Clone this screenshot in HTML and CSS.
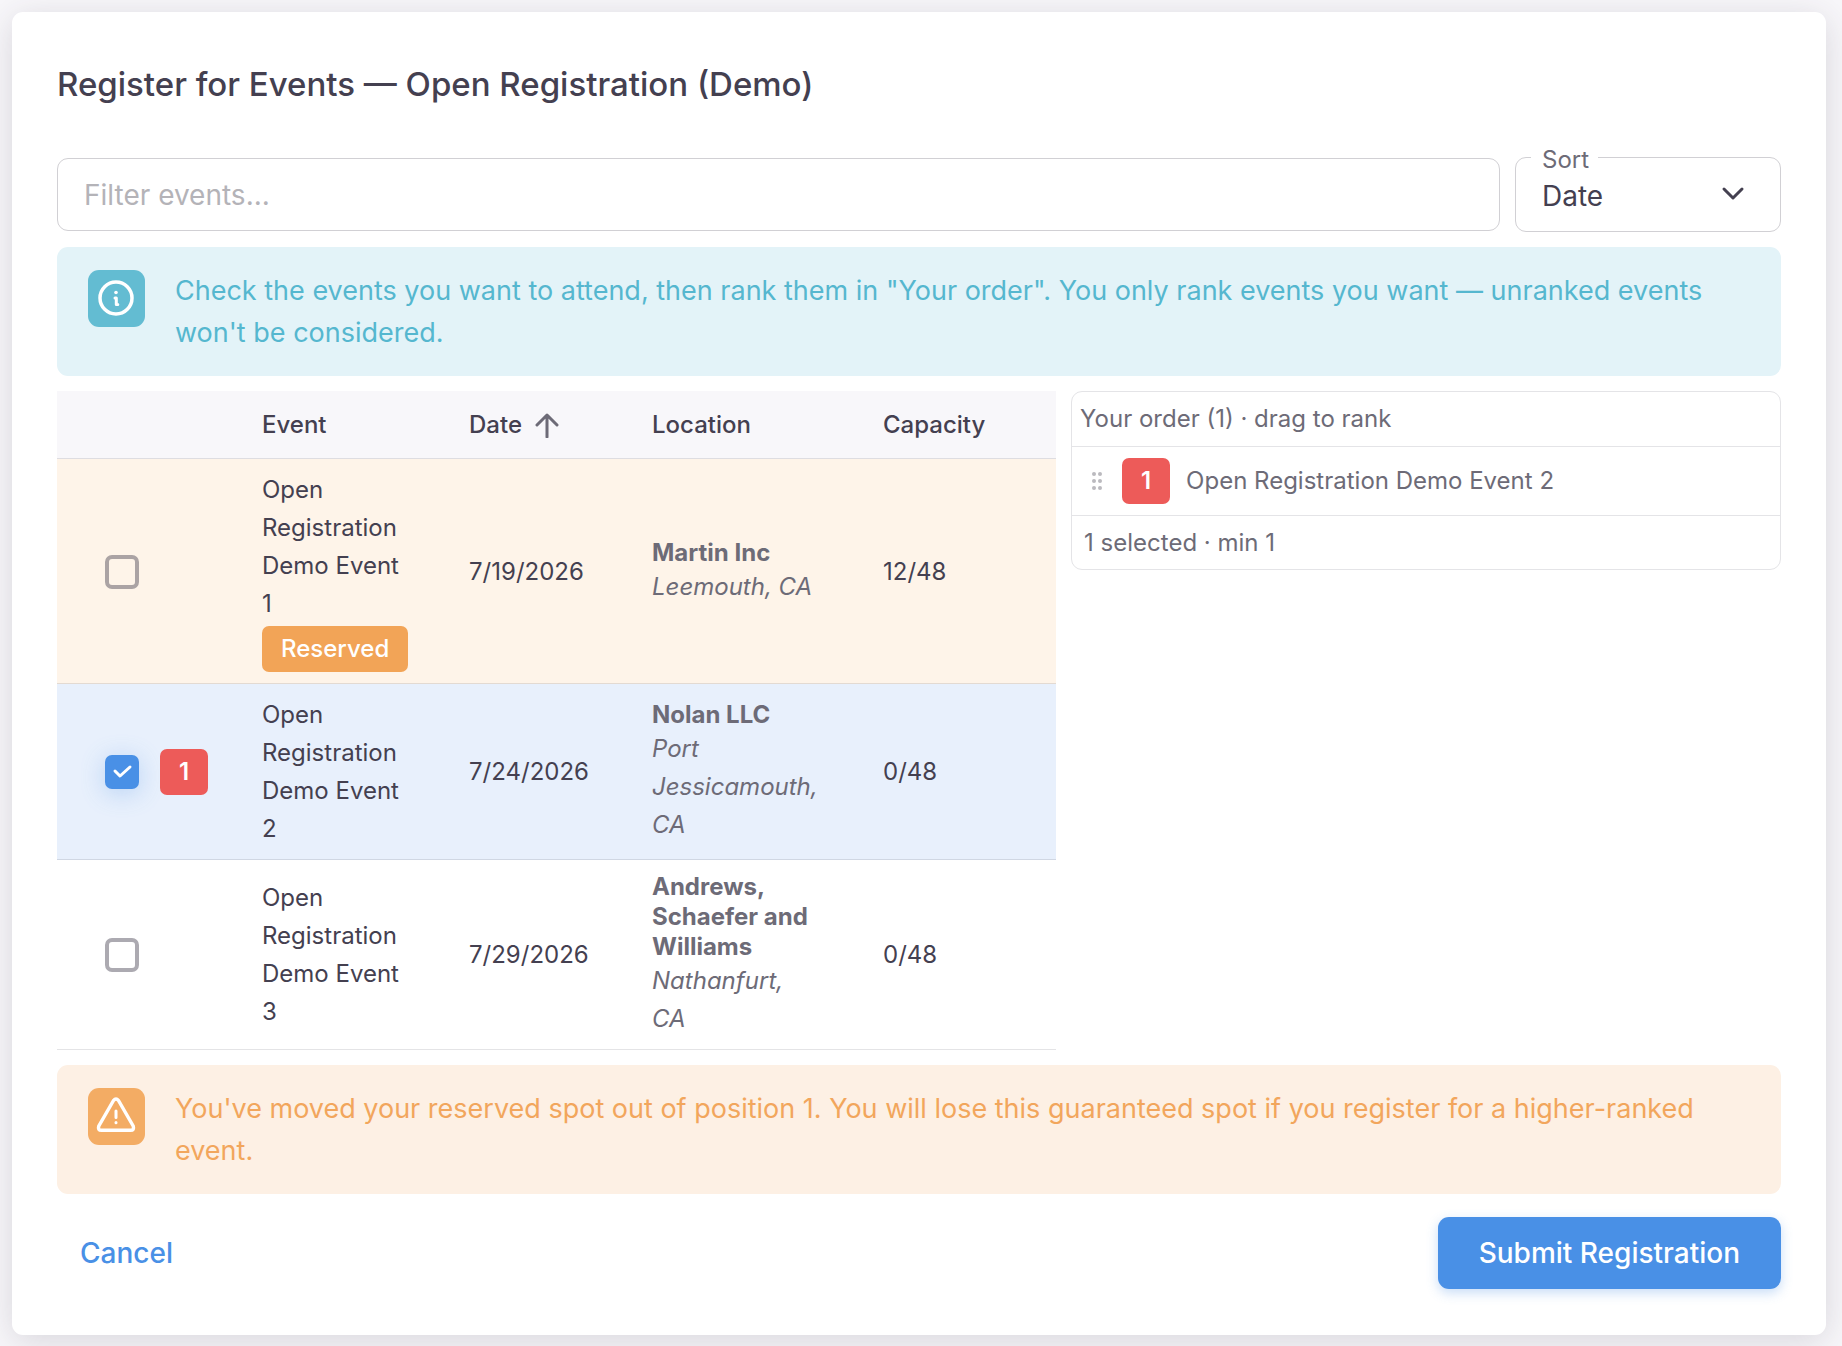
FILE: index.html
```html
<!DOCTYPE html>
<html lang="en">
<head>
<meta charset="utf-8">
<meta name="viewport" content="width=device-width, initial-scale=1">
<title>Register for Events</title>
<link rel="stylesheet" href="styles.css">
</head>
<body>
<main class="card">
  <h1 class="title">Register for Events — Open Registration (Demo)</h1>

  <form class="form">
    <div class="filters">
      <input class="filter-input" type="text" placeholder="Filter events..." aria-label="Filter events">
      <div class="sort">
        <label class="sort-label" for="sort">Sort</label>
        <select class="sort-select" id="sort">
          <option selected>Date</option>
          <option>Event</option>
          <option>Location</option>
        </select>
        <svg class="sort-arrow" viewBox="0 0 24 16" aria-hidden="true"><path d="M3 3l9 9 9-9"/></svg>
      </div>
    </div>

    <div class="alert alert-info">
      <span class="alert-icon">
        <svg viewBox="0 0 57 57" aria-hidden="true">
          <circle cx="28" cy="28" r="16"/>
          <circle class="dot" cx="28" cy="22.500" r="1.800"/>
          <path class="thin" d="M27 28h1.300v6.500h1.500"/>
        </svg>
      </span>
      <p class="alert-text">Check the events you want to attend, then rank them in "Your order". You only rank events you want — unranked events won't be considered.</p>
    </div>

    <div class="columns">
      <table class="events">
        <colgroup>
          <col class="col-select"><col class="col-event"><col class="col-date"><col class="col-location"><col>
        </colgroup>
        <thead>
          <tr>
            <th aria-label="Select"></th>
            <th>Event</th>
            <th aria-sort="ascending"><span class="sorted">Date
              <svg class="sort-up" viewBox="0 0 24 26" aria-hidden="true"><path d="M12 25V3M2 13L12 3l10 10"/></svg></span></th>
            <th>Location</th>
            <th>Capacity</th>
          </tr>
        </thead>
        <tbody>
          <tr class="row-reserved">
            <td><div class="pick"><input class="check" type="checkbox" aria-label="Open Registration Demo Event 1"></div></td>
            <td class="event">Open Registration Demo Event<br>1 <span class="chip">Reserved</span></td>
            <td>7/19/2026</td>
            <td class="location"><strong>Martin Inc</strong><em>Leemouth, CA</em></td>
            <td>12/48</td>
          </tr>
          <tr class="row-selected">
            <td><div class="pick"><input class="check" type="checkbox" checked aria-label="Open Registration Demo Event 2"><span class="rank">1</span></div></td>
            <td class="event">Open Registration Demo Event<br>2</td>
            <td>7/24/2026</td>
            <td class="location"><strong>Nolan LLC</strong><em>Port Jessicamouth, CA</em></td>
            <td>0/48</td>
          </tr>
          <tr>
            <td><div class="pick"><input class="check" type="checkbox" aria-label="Open Registration Demo Event 3"></div></td>
            <td class="event">Open Registration Demo Event<br>3</td>
            <td>7/29/2026</td>
            <td class="location"><strong>Andrews, Schaefer and Williams</strong><em>Nathanfurt, CA</em></td>
            <td>0/48</td>
          </tr>
        </tbody>
      </table>

      <section class="order">
        <h2 class="order-head">Your order (1) · drag to rank</h2>
        <ol class="order-list">
          <li class="order-item">
            <svg class="grip" viewBox="0 0 12 20" aria-hidden="true">
              <circle cx="3" cy="3" r="2"/><circle cx="9" cy="3" r="2"/>
              <circle cx="3" cy="10" r="2"/><circle cx="9" cy="10" r="2"/>
              <circle cx="3" cy="17" r="2"/><circle cx="9" cy="17" r="2"/>
            </svg>
            <span class="rank">1</span>
            <span>Open Registration Demo Event 2</span>
          </li>
        </ol>
        <p class="order-foot">1 selected · min 1</p>
      </section>
    </div>

    <div class="alert alert-warning">
      <span class="alert-icon">
        <svg viewBox="0 0 57 57" aria-hidden="true">
          <path d="M25.500 12.500L10.800 38Q9.500 42.300 13.500 42.300H42.500Q46.500 42.300 45.200 38L30.500 12.500Q28 9.500 25.500 12.500Z"/>
          <path class="thin" d="M28 23v6.500M28 34.600v.2"/>
        </svg>
      </span>
      <p class="alert-text">You've moved your reserved spot out of position 1. You will lose this guaranteed spot if you register for a higher-ranked event.</p>
    </div>

    <div class="actions">
      <button class="btn btn-text" type="button">Cancel</button>
      <button class="btn btn-primary" type="submit">Submit Registration</button>
    </div>
  </form>
</main>
</body>
</html>
```
FILE: styles.css
```css
:root {
  --heading: #444050;
  --muted: #6d6b77;
  --border: #e4e4e7;
  --primary: #4990e6;
  --warning: #f2a457;
  --danger: #ed5b59;
}

* {
  box-sizing: border-box;
}

body {
  margin: 0;
  padding: 12px 16px 12px 12px;
  background: #f8f7fa;
  color: var(--heading);
  font-family: Inter, "Liberation Sans", sans-serif;
  font-size: 24px;
  line-height: 38px;
}

.card {
  padding: 46px 45px;
  background: #fff;
  border-radius: 11px;
  box-shadow: 0 6px 34px rgba(47, 43, 61, 0.16);
}

.title {
  margin: 0 0 48px;
  font-size: 33px;
  line-height: 52px;
  font-weight: 500;
}

.form {
  display: flex;
  flex-direction: column;
  gap: 15px;
}

.filters {
  display: flex;
  align-items: center;
  gap: 15px;
  margin-top: -1px;
}

.filter-input {
  flex: 1;
  min-width: 0;
  height: 73px;
  padding: 0 26px;
  border: 1px solid #d1d0d4;
  border-radius: 11px;
  background: #fff;
  color: var(--heading);
  font: inherit;
  font-size: 28px;
}

.filter-input::placeholder {
  color: #b4b3b8;
  opacity: 1;
}

.sort {
  position: relative;
  width: 266px;
}

.sort-label {
  position: absolute;
  top: -16px;
  left: 16px;
  padding: 0 9px 0 11px;
  background: #fff;
  color: var(--muted);
  line-height: 38px;
}

.sort-select {
  display: block;
  width: 100%;
  height: 75px;
  padding: 3px 60px 0 26px;
  border: 1px solid #d1d0d4;
  border-radius: 11px;
  background: #fff;
  color: var(--heading);
  font: inherit;
  font-size: 28px;
  appearance: none;
}

.sort-arrow {
  position: absolute;
  top: 29px;
  right: 36px;
  width: 24px;
  height: 16px;
  fill: none;
  stroke: var(--heading);
  stroke-width: 3;
  stroke-linecap: round;
  stroke-linejoin: round;
  pointer-events: none;
}

.alert {
  display: flex;
  align-items: flex-start;
  gap: 30px;
  padding: 23px 31px 22px;
  border-radius: 11px;
}

.alert-icon {
  flex: none;
  width: 57px;
  height: 57px;
  border-radius: 11px;
}

.alert-icon svg {
  display: block;
  fill: none;
  stroke: #fff;
  stroke-width: 3.5;
  stroke-linecap: round;
  stroke-linejoin: round;
}

.alert-icon .dot {
  fill: #fff;
  stroke: none;
}

.alert-icon .thin {
  stroke-width: 3;
}

.alert-text {
  margin: 0;
  font-size: 27px;
  line-height: 42px;
}

.alert-info {
  background: #e3f3f8;
  color: #55b7cf;
}

.alert-info .alert-icon {
  background: #63bcd2;
}

.alert-warning {
  background: #fdf0e4;
  color: #f2a65c;
}

.alert-warning .alert-icon {
  background: #f3ac64;
}

.columns {
  display: grid;
  grid-template-columns: 38fr 27fr;
  align-items: start;
  gap: 15px;
}

.events {
  width: 100%;
  table-layout: fixed;
  border-collapse: separate;
  border-spacing: 0;
}

.col-select {
  width: 181px;
}

.col-event {
  width: 207px;
}

.col-date {
  width: 183px;
}

.col-location {
  width: 231px;
}

.events th,
.events td {
  padding: 12px 24px 11px;
  border-bottom: 1px solid rgba(47, 43, 61, 0.13);
  text-align: left;
  vertical-align: middle;
}

.events th {
  height: 68px;
  background: #f8f7fa;
  font-weight: 500;
}

.row-reserved {
  background: #fef4e9;
}

.row-selected {
  background: #e8f0fc;
}

.sorted {
  display: flex;
  align-items: center;
  gap: 13px;
}

.sort-up {
  width: 24px;
  height: 26px;
  fill: none;
  stroke: var(--muted);
  stroke-width: 3;
  stroke-linecap: round;
  stroke-linejoin: round;
}

.pick {
  display: flex;
  align-items: center;
  gap: 21px;
  padding-left: 24px;
}

.check {
  flex: none;
  width: 34px;
  height: 34px;
  margin: 0;
  border: 4px solid rgba(47, 43, 61, 0.4);
  border-radius: 7px;
  appearance: none;
}

.check:checked {
  border: 0;
  background: var(--primary) url("data:image/svg+xml,%3Csvg xmlns='http://www.w3.org/2000/svg' viewBox='0 0 34 34'%3E%3Cpath d='M10 16l5 5 10-9' fill='none' stroke='white' stroke-width='3' stroke-linecap='round' stroke-linejoin='round'/%3E%3C/svg%3E");
  box-shadow: 0 4px 24px rgba(73, 144, 230, 0.3);
}

.rank {
  flex: none;
  width: 48px;
  height: 46px;
  border-radius: 7px;
  background: var(--danger);
  color: #fff;
  font-weight: 600;
  line-height: 46px;
  text-align: center;
}

.chip {
  display: block;
  width: max-content;
  margin-top: 3px;
  padding: 0 19px;
  border-radius: 7px;
  background: var(--warning);
  color: #fff;
  font-weight: 500;
  line-height: 46px;
}

.events .location {
  padding-right: 40px;
  color: var(--muted);
}

.location strong,
.location em {
  display: block;
}

.location strong {
  font-weight: 700;
  line-height: 30px;
}

.order {
  border: 1px solid var(--border);
  border-radius: 11px;
  color: var(--muted);
}

.order-head,
.order-foot {
  margin: 0;
  padding: 8px;
  font-size: 24px;
  font-weight: 400;
}

.order-foot {
  padding: 8px 12px 7px;
}

.order-list {
  margin: 0;
  padding: 0;
  list-style: none;
  border: solid var(--border);
  border-width: 1px 0;
}

.order-item {
  display: flex;
  align-items: center;
  gap: 16px;
  padding: 11px 19px;
}

.grip {
  width: 12px;
  height: 20px;
  margin-right: 3px;
  fill: #bbbabf;
}

.actions {
  display: flex;
  align-items: center;
  justify-content: space-between;
  padding-top: 8px;
}

.btn {
  height: 72px;
  border: 0;
  border-radius: 11px;
  font: inherit;
  font-size: 28px;
  font-weight: 500;
}

.btn-text {
  padding: 0 23px;
  background: none;
  color: var(--primary);
}

.btn-primary {
  padding: 0 41px;
  background: var(--primary);
  color: #fff;
  box-shadow: 0 4px 12px rgba(73, 144, 230, 0.3);
}
```
